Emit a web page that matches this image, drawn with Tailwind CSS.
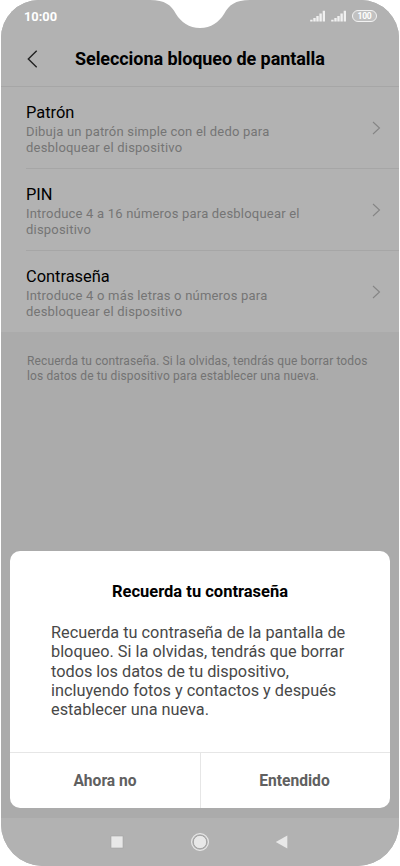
<!DOCTYPE html>
<html lang="es">
<head>
<meta charset="utf-8">
<title>Selecciona bloqueo de pantalla</title>
<script src="https://cdn.jsdelivr.net/npm/@tailwindcss/browser@4"></script>
</head>
<body class="bg-white font-['Roboto',sans-serif]">
<div class="relative mx-auto flex h-[866px] w-[400px] flex-col overflow-hidden bg-white px-px">
  <div class="flex h-full flex-col overflow-hidden rounded-t-[38px] rounded-b-[42px] bg-[#ababab]">
    <header class="h-[87px] shrink-0 border-b border-[#a6a6a6] bg-[#b2b2b2]">
      <div class="flex h-8 items-center justify-between pr-[22px] pl-[23px] text-white">
        <span class="pt-px text-[12.8px] leading-4 font-bold">10:00</span>
        <div class="flex items-center gap-[5px]">
          <svg width="16" height="12" viewBox="0 0 16 12" fill="#f0f0f0"><path d="M.2 9.8h2.4v1.7H.2zM3.3 8.1h2.4v3.4H3.3zM6.3 5.9h2.4v5.6H6.3zM9.4 3.5h2.4v8H9.4zM12.7.8H15v10.7h-2.3z"/></svg>
          <svg width="16" height="12" viewBox="0 0 16 12" fill="#f0f0f0"><path d="M.2 9.8h2.4v1.7H.2zM3.3 8.1h2.4v3.4H3.3zM6.3 5.9h2.4v5.6H6.3zM9.4 3.5h2.4v8H9.4zM12.7.8H15v10.7h-2.3z"/></svg>
          <span class="flex h-[12px] w-[25px] items-center justify-center rounded-full border border-[#f2f2f2] bg-white/20 text-[8.5px] leading-none font-bold tracking-[-0.2px]">100</span>
        </div>
      </div>
      <div class="flex h-[54px] items-center pl-[26px]">
        <svg class="shrink-0" width="11" height="18" viewBox="0 0 11 18" fill="none" stroke="#222" stroke-width="1.4"><path d="M9.7.7 1.3 9l8.4 8.3"/></svg>
        <h1 class="ml-[37px] text-[18px] leading-6 font-bold tracking-[-0.07px] whitespace-nowrap text-black">Selecciona bloqueo de pantalla</h1>
      </div>
    </header>
    <main class="flex-1">
      <section class="bg-[#b2b2b2] pl-[25px]">
        <div class="flex h-[82px] items-center justify-between border-b border-[#a6a6a6] pr-[18px]">
          <div class="pt-[3px] whitespace-nowrap">
            <h2 class="text-[16.4px] leading-5 text-black">Patrón</h2>
            <p class="mt-px text-[13px] leading-[15.5px] tracking-[0.2px] text-[#757575]">Dibuja un patrón simple con el dedo para<br>desbloquear el dispositivo</p>
          </div>
          <svg width="9" height="14" viewBox="0 0 9 14" fill="none" stroke="#858585" stroke-width="1.1"><path d="m1 1 6.5 6L1 13"/></svg>
        </div>
        <div class="flex h-[82px] items-center justify-between border-b border-[#a6a6a6] pr-[18px]">
          <div class="pt-[3px] whitespace-nowrap">
            <h2 class="text-[16.4px] leading-5 text-black">PIN</h2>
            <p class="mt-px text-[13px] leading-[15.5px] tracking-[0.2px] text-[#757575]">Introduce 4 a 16 números para desbloquear el<br>dispositivo</p>
          </div>
          <svg width="9" height="14" viewBox="0 0 9 14" fill="none" stroke="#858585" stroke-width="1.1"><path d="m1 1 6.5 6L1 13"/></svg>
        </div>
        <div class="flex h-[81px] items-center justify-between pr-[18px]">
          <div class="pt-[3px] whitespace-nowrap">
            <h2 class="text-[16.4px] leading-5 text-black">Contraseña</h2>
            <p class="mt-px text-[13px] leading-[15.5px] tracking-[0.2px] text-[#757575]">Introduce 4 o más letras o números para<br>desbloquear el dispositivo</p>
          </div>
          <svg width="9" height="14" viewBox="0 0 9 14" fill="none" stroke="#858585" stroke-width="1.1"><path d="m1 1 6.5 6L1 13"/></svg>
        </div>
      </section>
      <p class="pt-[22px] pl-[26px] text-[12px] leading-[14.5px] tracking-[0.12px] whitespace-nowrap text-[#737373]">Recuerda tu contraseña. Si la olvidas, tendrás que borrar todos<br>los datos de tu dispositivo para establecer una nueva.</p>
    </main>
    <nav class="flex h-[48px] shrink-0 justify-center bg-[#b2b2b2] pt-[14px]">
      <svg width="190" height="22" viewBox="0 0 190 22"><rect x="6" y="4" width="12" height="12" fill="#e8e8e8" stroke="#a2a2a2" stroke-width=".6"/><circle cx="95" cy="10" r="8.4" fill="none" stroke="#e8e8e8" stroke-width="1.2"/><circle cx="95" cy="10" r="6.7" fill="#e8e8e8" stroke="#999" stroke-width=".8"/><path d="m170.8 10 11.5-6.5v13z" fill="#e8e8e8"/></svg>
    </nav>
  </div>
  <svg class="absolute top-0 left-[150px]" width="100" height="29" viewBox="0 0 100 29"><path d="M0 0C15 0 21 5 26 14c5 8 13 14 24 14s19-6 24-14C79 5 85 0 100 0z" fill="#fff"/></svg>
  <div role="dialog" class="absolute top-[551px] left-[10px] flex h-[257px] w-[380px] flex-col overflow-hidden rounded-[10px] bg-white">
    <div class="flex-1 pt-[31px]">
      <h2 class="text-center text-[16.5px] leading-5 font-bold whitespace-nowrap text-black">Recuerda tu contraseña</h2>
      <p class="mt-[21px] pl-[41px] text-[16.3px] leading-[19.25px] whitespace-nowrap text-[#484848]">Recuerda tu contraseña de la pantalla de<br>bloqueo. Si la olvidas, tendrás que borrar<br>todos los datos de tu dispositivo,<br>incluyendo fotos y contactos y después<br>establecer una nueva.</p>
    </div>
    <div class="grid h-[56px] grid-cols-[191px_189px] border-t border-[#e6e6e6] text-[15.6px] font-bold text-[#606060]">
      <button class="border-r border-[#e6e6e6] pt-[3px]">Ahora no</button>
      <button class="pt-[3px] pr-[2px]">Entendido</button>
    </div>
  </div>
</div>
</body>
</html>
